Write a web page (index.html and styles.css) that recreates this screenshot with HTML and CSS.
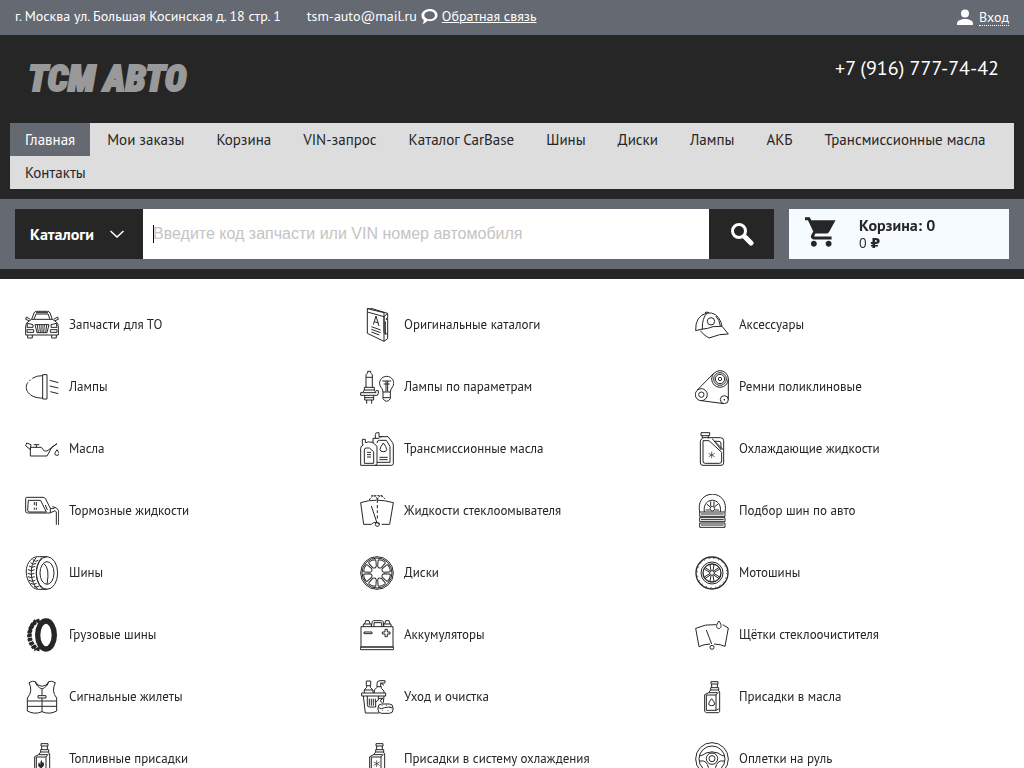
FILE: index.html
```html
<!DOCTYPE html>
<html lang="ru">
<head>
<meta charset="utf-8">
<meta name="viewport" content="width=device-width, initial-scale=1">
<title>ТСМ АВТО</title>
<link rel="stylesheet" href="styles.css">
</head>
<body>
<svg class="sprite" aria-hidden="true">
  <symbol id="bottle" viewBox="0 0 102 102">
    <path d="M48 5h21v7H48zM50 12v11M67 12v11M47 23h24v7H47zM47 30l-6 8-12 6v50l5 4h37l3-4V36l-4-6M34 45h29l7-9M34 45v46h29V45M63 91l8-4M41 38h26"/>
  </symbol>
  <symbol id="window" viewBox="0 0 102 102">
    <path d="M41 12q10-4 20 0 2 1 1 4l-5 15q-6 7-12 0l-5-15q-1-3 1-4z"/>
  </symbol>
</svg>

<div class="topbar">
  <div class="contacts">
    <span class="address">г. Москва ул. Большая Косинская д. 18 стр. 1</span>
    <span class="mail">tsm-auto@mail.ru</span>
    <svg class="bubble" viewBox="0 0 18 18" aria-hidden="true"><path fill-rule="evenodd" d="M9.500 1C14 1 17.500 3.800 17.500 7.500s-3.500 6.500-8 6.500c-1 0-1.900-.1-2.700-.4C5.500 15.300 4 16.500 1.500 17c1-1.300 1.500-2.600 1.400-4.200C1.200 11.600.5 9.800.5 7.500.5 3.800 5 1 9.500 1zm0 2.500C6.200 3.500 3.500 5.200 3.500 7.700s2.700 4.200 6 4.200 5.300-1.800 5.300-4.200-2-4.200-5.300-4.200z"/></svg>
    <a class="feedback" href="#">Обратная связь</a>
  </div>
  <div class="login">
    <svg class="user" viewBox="0 0 16 16" aria-hidden="true"><circle cx="8" cy="4.500" r="4"/><path d="M0 16v-1.500c0-3 4-4.500 8-4.500s8 1.500 8 4.500V16z"/></svg>
    <a href="#">Вход</a>
  </div>
</div>

<header class="header">
  <div class="brand-row">
    <a class="logo" href="#">ТСМ АВТО</a>
    <a class="phone" href="#">+7 (916) 777-74-42</a>
  </div>
  <nav class="nav">
    <a class="active" href="#">Главная</a>
    <a href="#">Мои заказы</a>
    <a href="#">Корзина</a>
    <a href="#">VIN-запрос</a>
    <a href="#">Каталог CarBase</a>
    <a href="#">Шины</a>
    <a href="#">Диски</a>
    <a href="#">Лампы</a>
    <a href="#">АКБ</a>
    <a href="#">Трансмиссионные масла</a>
    <a href="#">Контакты</a>
  </nav>
</header>

<div class="tools">
  <form class="search">
    <button class="catalogs" type="button">Каталоги
      <svg viewBox="0 0 14 8" aria-hidden="true"><path d="M.5 1L7 7l6.500-6"/></svg>
    </button>
    <input class="query" type="text" aria-label="Поиск запчасти" placeholder="Введите код запчасти или VIN номер автомобиля" autofocus>
    <button class="find" type="submit" aria-label="Найти">
      <svg viewBox="0 0 24 24" aria-hidden="true"><circle cx="9" cy="9" r="6.500"/><path class="grip" d="M15 15l6 6"/></svg>
    </button>
  </form>
  <a class="cart" href="#">
    <svg viewBox="1 2 21 20" aria-hidden="true"><path d="M7 18c-1.100 0-1.990.9-1.990 2S5.900 22 7 22s2-.9 2-2-.9-2-2-2zM1 2v2h2l3.600 7.590-1.350 2.450c-.16.280-.25.610-.25.960 0 1.100.9 2 2 2h12v-2H7.420c-.14 0-.25-.11-.25-.25l.03-.12.900-1.630h7.450c.75 0 1.410-.41 1.750-1.030L21.700 4H5.210l-.94-2H1zm16 16c-1.100 0-1.990.9-1.990 2s.89 2 1.990 2 2-.9 2-2-.9-2-2-2z"/></svg>
    <span class="cart-text"><b>Корзина: 0</b><span>0 <span class="ruble">₽</span></span></span>
  </a>
</div>

<main class="categories">
  <a href="#"><svg viewBox="0 0 102 102"><path d="M20 34L27 15q2-5 8-5h32q6 0 8 5l7 19M27 34l6-16h36l6 16M33 14h36M20 34h62l12 8q6 5 6 15v24H2V57q0-10 6-15zM30 50h42l-6 24H36zM37 50l3 24M44 50l2 24M51 50v24M58 50l-2 24M65 50l-3 24M8 46l16 4v8H6zM94 46l-16 4v8h18zM6 65h20v8H6zM76 65h20v8H76zM8 81v9h14v-9M80 81v9h14v-9M16 34L4 27l-2 7 10 4M86 34l12-7 2 7-10 4"/></svg>Запчасти для ТО</a>
  <a href="#"><svg viewBox="0 0 102 102"><path d="M22 2l50 12v60l11 5M22 2v74l50 24V26L22 12M22 2q8-4 14 0l47 14-11 10M83 16v76l-11 8M76 40v40M79 30v6M40 50l8-26 9 30M43 41l12 4M34 56l28 10M34 64l28 10M34 72l24 9"/></svg>Оригинальные каталоги</a>
  <a href="#"><svg viewBox="0 0 102 102"><path d="M2 68Q0 24 36 15q30-4 42 28l3 12M2 68l16-4q22-2 36-8l27-1 19 23-26 2-32 10q-16-8-26-22M22 64q-1-36 15-49M30 14q5-4 12 0M62 24q12 12 14 30"/><circle cx="48" cy="40" r="11"/></svg>Аксессуары</a>
  <a href="#"><svg viewBox="0 0 102 102"><path d="M53 14h13v73H53zM54 17q-18-1-32 8M17 29l-4 4M9 37C-6 56 12 86 54 84M74 31l26 7M74 48l26 6M76 65l24 6"/></svg>Лампы</a>
  <a href="#"><svg viewBox="0 0 102 102"><path d="M18 52V14l5-5V4h9v5l5 5v38M18 22h19M13 52h30v8H13zM13 60l-5 8h40l-5-8M8 68H2v8h50l3-6v-8h-7M14 76v14h27V76M14 83h27M20 90v11M35 90v11M69 66q-1-10-6-14C52 36 64 19 80 19s28 17 17 33q-5 5-6 14zM69 66v20q5 8 11 8t11-8V66M69 83h22M67 33h26M71 42h18M78 33v32M83 33v32"/></svg>Лампы по параметрам</a>
  <a href="#"><svg viewBox="0 0 102 102"><circle cx="75" cy="27" r="25"/><circle cx="75" cy="27" r="19"/><circle cx="75" cy="27" r="14"/><circle cx="75" cy="27" r="5"/><circle cx="19" cy="74" r="18"/><circle cx="19" cy="74" r="8"/><circle cx="88" cy="89" r="12"/><path d="M7 60l49-50M100 27v62M19 92l68 9M88 87v4M86 89h4"/></svg>Ремни поликлиновые</a>
  <a href="#"><svg viewBox="0 0 102 102"><path d="M16 46v26h50l15-27 15-10-30 22h-8l-9-11zM16 53L2 41l3-8 13 5-2 15M34 46v-7M26 38h17M96 53q-13 17 0 17t0-17z"/></svg>Масла</a>
  <a href="#"><svg viewBox="0 0 102 102"><path d="M49 100H2V49q0-8 8-10l-3-3v-14h9v10q8-4 22-1l13 12v51q0 5-5 6h48q6 0 6-6V40q0-5-3-9L84 14H62l-5 5H39v15M46 19V8q0-6 6-6h5v12h10M13 94V54q0-6 6-6h9l13 11v35zM21 61h12M21 68h12M21 75h12M51 91h39V43L79 25H58q-7 0-7 8M58 76h25M58 83h25M70 33q-20 26 0 26t0-26z"/></svg>Трансмиссионные масла</a>
  <a href="#"><svg viewBox="0 0 102 102"><path d="M18 2h26v9H18zM22 11v9M40 11v8M22 20q-6 2-6 8v65q0 7 8 7h54q8 0 8-7V26q0-9-10-9H22M24 26h18l38 35v26q0 7-7 7H31q-7 0-7-7V26M58 28h14q6 0 6 8v17zM51 20l35 34"/><path class="thin" d="M50 59v20M41 64l18 10M59 64L41 74"/></svg>Охлаждающие жидкости</a>
  <a href="#"><svg viewBox="0 0 102 102"><path d="M5 10h49q5 0 8 5l14 28q8 3 14-2M5 10q-3 0-3 5v36q0 6 6 6h67l15-7 4 4v38M76 43v13M82 38q14 1 19 12v43M10 19h37l17 35H14q-6 0-6-6zM28 24v9M34 24v12M28 41v6M34 41v6M61 33l6 15"/></svg>Тормозные жидкости</a>
  <a href="#"><svg viewBox="0 0 102 102"><path d="M2 26q46-15 98 0L89 91H65M2 26l9 65h24q7-12 25 0M34 36l16 48M52 20v7M52 33v10M52 49v8M52 64v10"/><path class="spray" d="M28 18q6-12 14-12 8 1 10 12M52 18Q54 7 62 6q8 0 14 12M34 5h34"/><circle cx="52" cy="91" r="6"/></svg>Жидкости стеклоомывателя</a>
  <a href="#"><svg viewBox="0 0 102 102"><path d="M14 54C0-17 104-17 90 54M28 54c-7-47 55-47 48 0M47 22v14M57 22v14M35 30l11 9M69 30L58 39M32 48h12M60 48h12"/><circle cx="52" cy="44" r="7"/><path d="M14 54h76v13H14zM14 71h76v12H14zM14 87h76v13H14zM18 60h68M18 77h68M18 93h68"/></svg>Подбор шин по авто</a>
  <a href="#"><svg viewBox="0 0 102 102"><ellipse cx="66" cy="51" rx="32" ry="49"/><ellipse cx="66" cy="51" rx="21" ry="34"/><path d="M66 2H44C11-2-9 43 13 80q10 20 28 20h25M34 4C12 28 14 78 38 99M51 4C27 30 29 77 53 99M23 11l9 5 8-3M17 20l8 5 9-3M12 30l9 4 10-3M9 41l10 3 10-3M8 52l10 3 10-3M9 62l10 3 10-3M12 73l9 3 10-3M17 82l9 3 9-3M27 92l7 1 9-3M57 23q18 14 9 61"/></svg>Шины</a>
  <a href="#"><svg viewBox="0 0 102 102"><circle cx="51" cy="51" r="49"/><circle cx="51" cy="51" r="45"/><use href="#window" transform="rotate(22.500 51 51)"/><use href="#window" transform="rotate(67.500 51 51)"/><use href="#window" transform="rotate(112.500 51 51)"/><use href="#window" transform="rotate(157.500 51 51)"/><use href="#window" transform="rotate(202.500 51 51)"/><use href="#window" transform="rotate(247.500 51 51)"/><use href="#window" transform="rotate(292.500 51 51)"/><use href="#window" transform="rotate(337.500 51 51)"/></svg>Диски</a>
  <a href="#"><svg viewBox="0 0 102 102"><circle cx="51" cy="51" r="48" stroke-width="4"/><circle cx="51" cy="51" r="44" stroke-dasharray="3 11"/><circle cx="51" cy="51" r="33"/><circle cx="51" cy="51" r="27" stroke-width="4"/><circle cx="51" cy="51" r="7"/><path d="M48 44l-3-18M54 44l3-18M48 58l-3 18M54 58l3 18M44 49L28 39M46 45L31 35M58 49l16-10M56 45l15-10M44 53l-16 10M46 57L31 67M58 53l16 10M56 57l15 10"/></svg>Мотошины</a>
  <a href="#"><svg viewBox="0 0 102 102"><ellipse cx="63" cy="51" rx="25" ry="42" stroke-width="16"/><path stroke-width="12" stroke-dasharray="10 3" d="M44 7C4 18 5 84 44 95"/><path stroke-width="11" stroke-dasharray="8 4" d="M33 8C3 32 7 77 33 95"/></svg>Грузовые шины</a>
  <a href="#"><svg viewBox="0 0 102 102"><path d="M3 26h96v61H3zM1 87h100v8H1zM10 26v-8h24v8M14 18l3-10h10l3 10M70 26v-8h23v8M74 18l3-10h10l3 10M34 26l3-16q1-2 4-2h24q3 0 4 2l3 16M42 26V14h23v12M12 42h24v5H12zM75 34h7v8h8v6h-8v8h-7v-8h-8v-6h8z"/></svg>Аккумуляторы</a>
  <a href="#"><svg viewBox="0 0 102 102"><path d="M64 20Q31 17 2 31l10 55q13-7 33-8M83 20l17 10-10 55q-12-6-33-7M34 36l16 42M72 9c-24 30 22 31 0 0z"/><circle cx="51" cy="88" r="6"/></svg>Щётки стеклоочистителя</a>
  <a href="#"><svg viewBox="0 0 102 102"><path d="M12 8q11-7 19-3 3 15 20 22 17-7 20-22 8-4 20 3-13 26 4 46v39q-22 12-44 2-22 10-44-2V54Q25 34 12 8zM31 5q6 13 20 14Q66 18 71 5M51 27v20M51 54v41M8 63h87M8 79h87M39 47h24v7H39z"/></svg>Сигнальные жилеты</a>
  <a href="#"><svg viewBox="0 0 102 102"><path d="M19 3h13v14H19zM20 17v5l-7 8v9M31 17v5l8 8v9M13 30h26M51 22V11q0-9 9-9h15v7H62v11M62 9l10 7M51 20h13v5l8 8v6M51 22l-8 8v9M5 39h72v9H5zM10 48l6 51h41M72 48l-2 20M22 48v26q0 7 6 7h19V66l8-6V48M28 56v21M34 56v21M40 56v21M46 56v10M55 55h14l-9 7 8 7"/><rect x="54" y="72" width="45" height="28" rx="11"/><path d="M55 83q10 6 19 0 11-4 24 1M65 77h2M78 76h2M89 79h2M66 91h2M83 92h2"/></svg>Уход и очистка</a>
  <a href="#"><svg viewBox="0 0 102 102"><use href="#bottle"/><path d="M50 56q-18 21 0 21t0-21z"/></svg>Присадки в масла</a>
  <a href="#"><svg viewBox="0 0 102 102"><use href="#bottle"/><path class="solid" d="M51 52q-2 11 4 9 6 10-6 18-15-6-7-18l4 7q-1-9 5-16z"/></svg>Топливные присадки</a>
  <a href="#"><svg viewBox="0 0 102 102"><use href="#bottle"/><path class="thin" d="M50 55v20M41 60l18 10M59 60L41 70"/></svg>Присадки в систему охлаждения</a>
  <a href="#"><svg viewBox="0 0 102 102"><circle cx="51" cy="51" r="49"/><circle cx="51" cy="51" r="39"/><circle cx="51" cy="50" r="17"/><circle cx="51" cy="50" r="9"/><path d="M13 42q12-2 20-9 18-7 36 0 9 8 20 9M13 57h13q14 5 16 31M89 57H76q-14 5-16 31"/></svg>Оплетки на руль</a>
</main>
</body>
</html>
```
FILE: styles.css
```css
* {
  box-sizing: border-box;
}

body {
  margin: 0;
  background: #fff;
  color: #262626;
  font: 14px/18px "PT Sans", Roboto, "Noto Sans", sans-serif;
}

a {
  color: inherit;
  text-decoration: none;
}

.sprite {
  display: none;
}

.topbar {
  display: flex;
  justify-content: space-between;
  height: 35px;
  padding: 7px 15px;
  background: #656972;
  color: #fff;
}

.contacts,
.login {
  display: flex;
  align-items: center;
  height: 20px;
}

.contacts {
  gap: 4px;
  height: 18px;
}

.address {
  margin-right: 22px;
}

.bubble {
  width: 17px;
  height: 17px;
  fill: #fff;
}

.feedback {
  text-decoration: underline;
}

.login {
  gap: 6px;
}

.login a {
  border-bottom: 1px dotted #fff;
  line-height: 16px;
}

.user {
  width: 16px;
  height: 16px;
  fill: #fff;
}

.header {
  padding: 0 10px 10px;
  background: #262626;
}

.brand-row {
  display: flex;
  justify-content: space-between;
  align-items: flex-start;
  height: 88px;
  padding: 20px 15px 0 18px;
}

.logo {
  color: #999;
  font: italic 900 37px/48px Impact, "Roboto Condensed", "Liberation Sans Narrow", Roboto, sans-serif;
  -webkit-text-stroke: 2px #999;
}

.phone {
  color: #fff;
  font-size: 20px;
  line-height: 26px;
}

.nav {
  display: flex;
  flex-wrap: wrap;
  column-gap: 2px;
  background: #ddd;
  font-size: 15px;
  line-height: 33px;
}

.nav a {
  padding: 0 15px;
}

.nav .active {
  background: #656972;
  color: #fff;
}

.tools {
  display: flex;
  gap: 15px;
  padding: 10px 15px;
  border-bottom: 10px solid #262626;
  background: #656972;
}

.search {
  display: flex;
  flex: 1;
  height: 50px;
}

.search button {
  border: 0;
  background: #262626;
  color: #fff;
}

.catalogs {
  display: flex;
  align-items: center;
  justify-content: space-between;
  width: 128px;
  padding: 0 19px 0 15px;
  font: 700 16px/20px "PT Sans", Roboto, sans-serif;
}

.catalogs svg {
  width: 14px;
  height: 8px;
  fill: none;
  stroke: #fff;
  stroke-width: 1.5;
}

.query {
  flex: 1;
  min-width: 0;
  padding: 0 10px;
  border: 0;
  outline: 0;
  background: linear-gradient(#000, #000) 10px center / 1px 18px no-repeat #fff;
  font: 16px "Liberation Sans", Arial, sans-serif;
  caret-color: transparent;
}

.query::placeholder {
  color: #c4c4c4;
}

.find {
  width: 65px;
  padding: 0;
}

.find svg {
  width: 24px;
  height: 24px;
  fill: none;
  stroke: #fff;
  stroke-width: 3;
  vertical-align: middle;
}

.find .grip {
  stroke-width: 5;
  stroke-linecap: round;
}

.cart {
  display: flex;
  gap: 23px;
  width: 220px;
  padding: 7px 16px;
  background: #f5fbff;
}

.cart svg {
  width: 31px;
  height: 32px;
  fill: #262626;
}

.cart-text {
  display: flex;
  flex-direction: column;
}

.cart-text b {
  font-size: 16px;
}

.ruble {
  font-family: "DejaVu Sans", sans-serif;
  font-weight: 700;
}

.categories {
  display: grid;
  grid-template-columns: repeat(3, 1fr);
  grid-auto-rows: 62px;
  padding: 15px 4px 15px 15px;
  font-size: 13px;
}

.categories a {
  display: flex;
  align-items: center;
  gap: 10px;
  padding: 0 10px;
}

.categories svg {
  flex: none;
  width: 34px;
  height: 34px;
  fill: none;
  stroke: #262626;
  stroke-width: 3;
  stroke-linejoin: round;
}

.categories .solid {
  fill: #262626;
  stroke: none;
}

.categories .thin {
  stroke-width: 2;
}

.categories .spray {
  stroke-dasharray: 6 3;
}
```
